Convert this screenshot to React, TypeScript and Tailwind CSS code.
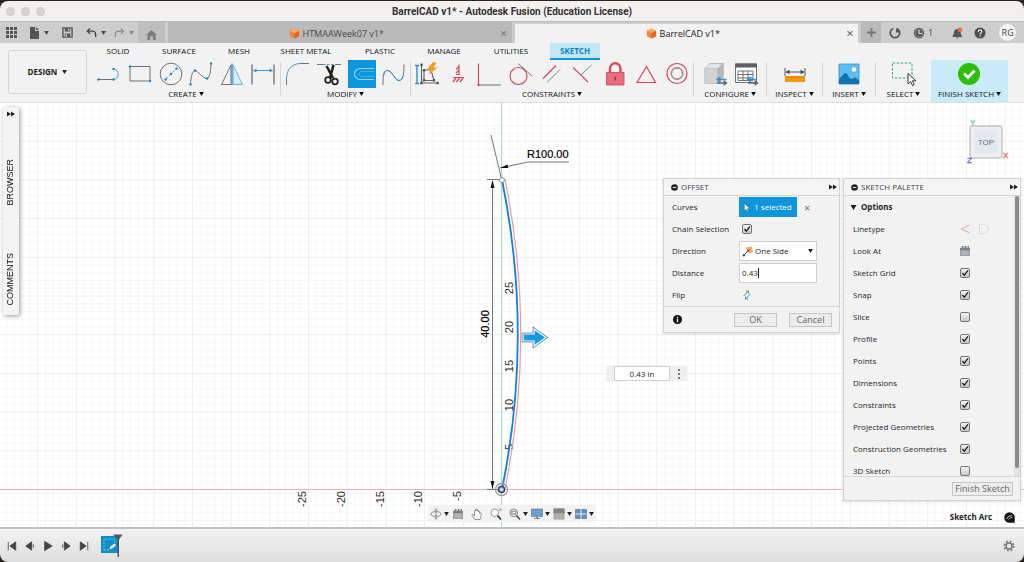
import React, { useState } from "react";

const BLUE = "#2a93d0";
const RED = "#d9485a";

function Caret({ className = "" }: { className?: string }) {
  return (
    <svg viewBox="0 0 6 5" className={"h-[4px] w-[5px] shrink-0 " + className} fill="currentColor" aria-hidden="true">
      <path d="M0 0h6L3 5z" />
    </svg>
  );
}

function Icon({ children, size = "size-[26px]" }: { children: React.ReactNode; size?: string }) {
  return (
    <svg viewBox="0 0 26 26" className={size + " shrink-0"} fill="none" stroke="#5f6468" strokeWidth="0.9" aria-hidden="true">
      {children}
    </svg>
  );
}

function Dots({ pts }: { pts: number[][] }) {
  return (
    <>
      {pts.map(([x, y]) => (
        <circle key={x + "-" + y} cx={x} cy={y} r="1.200" fill="#1a84d0" stroke="none" />
      ))}
    </>
  );
}

const icons: Record<string, React.ReactNode> = {
  Line: (
    <>
      <path d="M2.500 18.500h15" />
      <path d="M17.500 8a5.300 5.300 0 0 1 0 10.500" stroke={BLUE} />
      <Dots pts={[[2.5, 18.5], [17.5, 18.5], [17.5, 8]]} />
    </>
  ),
  Rectangle: (
    <>
      <path d="M3 5.500h20v14.500H3z" />
      <Dots pts={[[3, 5.5], [23, 20]]} />
    </>
  ),
  Circle: (
    <>
      <circle cx="13" cy="13" r="10.800" />
      <path d="M8 18L18 8" stroke={BLUE} strokeDasharray="3 1.500" />
      <Dots pts={[[7.5, 18.5], [13, 13], [18.5, 7.5]]} />
    </>
  ),
  Spline: (
    <>
      <path d="M2.500 23.500C3 15 4.500 9.500 7 9.500s8 8 12 8c3 0 4-9 4-15" />
      <Dots pts={[[2.5, 23.5], [7, 9.5], [19, 17.5], [23, 2.5]]} />
    </>
  ),
  Mirror: (
    <>
      <path d="M12 4v19.500H2.500z" />
      <path d="M14 4v19.500h9.500z" fill="#d3ecf9" stroke="#6aa9cc" />
      <path d="M13 2.500v21.500" stroke={BLUE} strokeWidth="1.200" />
    </>
  ),
  Dimension: (
    <>
      <path d="M2 3.500v20M24 3.500v20" strokeWidth="1.200" />
      <path d="M3.500 9.500h19" stroke={BLUE} />
      <path d="M3 9.500l3.500-2v4zM23 9.500l-3.500-2v4z" fill={BLUE} stroke="none" />
    </>
  ),
  Fillet: (
    <>
      <path d="M2.500 24v-6M17 2.500h8" />
      <path d="M2.500 18C2.500 8 8 2.500 17 2.500" stroke={BLUE} />
    </>
  ),
  Trim: (
    <>
      <path d="M1 3.500h6M19 3.500h6" />
      <path d="M7 3.500h12" stroke={BLUE} strokeDasharray="2.500 1.500" />
      <path d="M10.500 5l6.500 12M17.500 4L14 17" stroke="#222" strokeWidth="2.600" />
      <circle cx="12" cy="19" r="2.800" stroke="#222" strokeWidth="1.800" />
      <circle cx="19" cy="20.500" r="2.800" stroke="#222" strokeWidth="1.800" />
    </>
  ),
  Offset: (
    <>
      <path d="M25 7.500H11a5.500 5.500 0 0 0 0 11h14" stroke="#9ad6f4" strokeWidth="1.200" />
      <path d="M25 10.500H12.500a2.500 2.500 0 0 0 0 5H25" stroke="#56b5e6" strokeWidth="0.700" />
    </>
  ),
  "Change curve": (
    <>
      <path d="M2 24C2 12 3 9.500 6.500 9.500c5 0 7 10 11.500 10 4 0 5-6 5-16" />
      <path d="M2.800 14.500C3.500 10.500 4.500 9.500 6.500 9.500c5 0 7 10 11.500 10 2 0 3.300-1.500 4.200-4.500" stroke={BLUE} />
    </>
  ),
  "Auto constrain": (
    <>
      <path d="M3 4.500v18M1 4.500h4M1 22.500h4" stroke={BLUE} strokeWidth="1.400" />
      <path d="M7.500 3.500v18.500h16.500M10 9v10.500h10l-3-10.500z" strokeWidth="1.100" />
      <path d="M6.300 2.500h2.400v2.400H6.300zM6.300 20.800h2.400v2.400H6.300zM22.500 20.800h2.400v2.400h-2.400zM8.800 8h2.400v2.400H8.800zM8.800 18h2.400v2.400H8.800zM18.800 18h2.400v2.400h-2.400z" fill="#555" stroke="none" />
      <path d="M19 1l-6 7h4l-2 5.500 8.500-7h-4l3-5z" fill="#f5a01d" stroke="none" />
    </>
  ),
  "Horizontal/Vertical": (
    <g stroke={RED}>
      <path d="M14 3.500v10M11 12l3-3M11 8.500l3-3M11 13.500h4M8 16.500h11" strokeWidth="1.200" />
      <path d="M8 21l3-4M11.500 21l3-4M15 21l3-4" strokeWidth="1.400" />
    </g>
  ),
  Perpendicular: (
    <>
      <path d="M2.500 24h22.500" />
      <path d="M2.500 2.500V24" stroke={RED} strokeWidth="1.200" />
      <circle cx="2.500" cy="24" r="1.200" fill={RED} stroke="none" />
    </>
  ),
  Tangent: (
    <>
      <circle cx="10.500" cy="15" r="8.500" stroke={RED} strokeWidth="1.200" />
      <path d="M10 2.500L24 15" />
    </>
  ),
  Parallel: (
    <>
      <path d="M4 17.500L17 4.500" stroke={RED} strokeWidth="1.200" />
      <path d="M8 21.500L21 8.500" stroke="#5d7f6e" />
    </>
  ),
  Coincident: (
    <>
      <path d="M3 6.500l15 14.500" stroke={RED} strokeWidth="1.100" />
      <path d="M11 14L21.500 4" stroke="#5d7f6e" />
    </>
  ),
  Fix: (
    <>
      <path d="M8 12V7.500a5.200 5.200 0 0 1 10.400 0V12" stroke={RED} strokeWidth="2.400" />
      <path d="M4.500 11.500h17.500v12.500H4.500z" fill="#ea6d7b" stroke={RED} />
      <path d="M13.200 15.500v4" stroke="#8c2330" strokeWidth="1.200" />
    </>
  ),
  Equal: <path d="M13.500 5.500L22.500 21.500h-18.500z" stroke={RED} strokeWidth="1.200" />,
  Concentric: (
    <>
      <circle cx="13" cy="12.500" r="10" stroke={RED} strokeWidth="1.200" />
      <circle cx="13" cy="12.500" r="5.400" stroke="#4f8a72" />
      <circle cx="13" cy="12.500" r="6.200" stroke={RED} strokeWidth="0.600" />
    </>
  ),
  Configure: (
    <>
      <path d="M3 7.500L8 2.500h13v14l-5 6H3z" fill="#e3e4e5" stroke="#b2b4b6" />
      <path d="M3 7.500h13v15H3z" fill="#cfd1d2" stroke="#c0c2c4" />
      <path d="M16 7.500l5-5v14l-5 6z" fill="#b6b9bb" stroke="#b0b2b4" />
      <path d="M14.500 18.500h10M18.500 16l-3.500 2.500 3.500 2.500" stroke={BLUE} strokeWidth="1.400" />
      <path d="M15 22h9.500M21.500 19.800l3 2.200-3 2.200" strokeWidth="1.400" />
    </>
  ),
  "Configuration table": (
    <>
      <path d="M2.500 3h21v18.500h-21z" fill="#fff" />
      <path d="M2 2.500h22v4H2z" fill="#5c5f63" stroke="none" />
      <path d="M5 10h15M5 13.500h15M5 17h15M5 10v9.500h15M10 10v9.500M15 10v9.500M20 10v9.500" />
      <path d="M14 18.500h10M18 16l-3.500 2.500 3.500 2.500" stroke={BLUE} strokeWidth="1.400" />
      <path d="M15 22h9.500M21.500 19.800l3 2.200-3 2.200" strokeWidth="1.400" />
    </>
  ),
  Measure: (
    <>
      <path d="M3 7v8M23 7v8M4 11h18" stroke="#445" />
      <path d="M3.500 11l4-2.200v4.400zM22.500 11l-4-2.200v4.400z" fill="#33506a" stroke="none" />
      <path d="M3 15h20v6H3z" fill="#f4980f" stroke="none" />
      <path d="M6 15v2M9 15v2M12 15v2M15 15v2M18 15v2M21 15v2" stroke="#b66a00" strokeWidth="0.600" />
    </>
  ),
  Insert: (
    <>
      <path d="M3 3h20v20H3z" fill="#5fbcf0" stroke="#3497d2" />
      <circle cx="18" cy="8.500" r="2.300" fill="#fff" stroke="none" />
      <path d="M3 23V18c3-2 4.500-6 6.500-6s4 6 5.500 6 2.500-1.500 4-1.500 2.500 2.500 4 3V23z" fill="#1273ad" stroke="none" />
    </>
  ),
  Select: (
    <>
      <path d="M1.500 2h19.500v15H1.500z" stroke="#35a86c" strokeDasharray="2.500 1.600" strokeWidth="1" />
      <path d="M17 12.500v10.500l2.600-2.400 1.900 3.900 1.800-0.900-1.900-3.800h3.400z" fill="#fff" stroke="#333" strokeWidth="1" />
    </>
  ),
  "Finish sketch": (
    <>
      <circle cx="12" cy="13" r="11" fill="#2bc003" stroke="none" />
      <path d="M7 12.500l4 4 6.500-7" stroke="#fff" strokeWidth="2.800" />
    </>
  ),
};

function ToolGroup({ label, tools, width }: { label: string; tools: string[]; width: string }) {
  return (
    <div className={"flex shrink-0 flex-col items-center " + width}>
      <div className="flex w-full">
        {tools.map((t) => (
          <button key={t} aria-label={t} className="flex h-[28px] flex-1 items-center justify-center">
            <span className={t === "Offset" ? "flex h-[28px] w-[28px] items-center justify-center bg-[#0c96dc]" : "flex"}>
              <Icon>{icons[t]}</Icon>
            </span>
          </button>
        ))}
      </div>
      <button className="flex h-[12px] items-center gap-[2px] whitespace-nowrap text-[8px] leading-[12px] text-[#111]">
        {label}
        <Caret />
      </button>
    </div>
  );
}

function Sep() {
  return <div className="mt-[2px] h-[34px] w-px shrink-0 bg-[#d5d5d5]" />;
}

function Check({ id, on, set }: { id: string; on: boolean; set: () => void }) {
  return (
    <span className="grid size-[10px]">
      <input
        id={id}
        type="checkbox"
        checked={on}
        onChange={set}
        className="col-start-1 row-start-1 size-[10px] appearance-none rounded-[2px] border border-[#757575] bg-linear-to-b from-[#f4f4f4] to-[#c8c8c8]"
      />
      {on && (
        <svg viewBox="0 0 10 10" className="pointer-events-none col-start-1 row-start-1 size-[10px]" fill="none" stroke="#161616" strokeWidth="1.300">
          <path d="M2.500 5l1.800 2.300L8 2.300" />
        </svg>
      )}
    </span>
  );
}

function PanelHeader({ title }: { title: string }) {
  return (
    <div className="flex h-[17px] shrink-0 items-center gap-[3px] border-b border-[#d6d6d6] bg-[#f5f5f5] px-[7px] text-[8px] text-[#444]">
      <svg viewBox="0 0 8 8" className="size-[7px]">
        <circle cx="4" cy="4" r="3.800" fill="#222" />
        <path d="M2 4h4" stroke="#fff" />
      </svg>
      <h2 className="flex-1">{title}</h2>
      <button aria-label={"Collapse " + title} className="-mr-[5px]">
        <Forward />
      </button>
    </div>
  );
}

function Forward() {
  return (
    <svg viewBox="0 0 8 6" className="h-[6px] w-[8px]" fill="#222">
      <path d="M0 0.500l4 2.500-4 2.500zM4 0.500l4 2.500-4 2.500z" />
    </svg>
  );
}

function Calendar({ className = "" }: { className?: string }) {
  return (
    <svg viewBox="0 0 12 12" className={"size-[12px] " + className}>
      <path d="M1 4h10v7H1z" fill="#9ba1ab" />
      <path d="M1 3h10v2H1zM2.500 1h2v3h-2zM5.500 1h2v3h-2zM8.500 1h1.500v3H8.500z" fill="#7b808a" />
      <path d="M2 7h8M2 9h8M4 6v4M6 6v4M8 6v4" stroke="#c9cdd4" strokeWidth="0.500" />
    </svg>
  );
}

function Cube() {
  return (
    <svg viewBox="0 0 12 12" className="size-[11px]">
      <path d="M6 0.500l5 2.500v6L6 11.500 1 9V3z" fill="#f4813a" />
      <path d="M6 5.500l5-2.500v6L6 11.500z" fill="#e0661f" />
      <path d="M6 0.500l5 2.500-5 2.500L1 3z" fill="#f9ac68" />
    </svg>
  );
}

function TitleBar() {
  return (
    <header className="flex h-[20px] shrink-0 items-center bg-[#f2f1ef] px-[6px]">
      <div className="flex flex-1 gap-[6px]">
        {["Close", "Minimize", "Zoom"].map((n) => (
          <button key={n} aria-label={n} className="size-[9px] rounded-full border border-[#cccac8] bg-[#d6d4d2]" />
        ))}
      </div>
      <h1 className="font-[Roboto,sans-serif] text-[10px] font-bold text-[#333]">
        BarrelCAD v1* - Autodesk Fusion (Education License)
      </h1>
      <div className="flex-1" />
    </header>
  );
}

function DocumentBar() {
  return (
    <div className="flex h-[22px] shrink-0 border-t border-[#bcbcbc] bg-[#cdcdcd] text-[#4a4a4a]">
      <div className="flex w-[138px] shrink-0 items-center pl-[6px]">
        <button aria-label="Apps">
          <svg viewBox="0 0 11 11" className="size-[11px]" fill="#555">
            {[0, 4, 8].map((y) => [0, 4, 8].map((x) => <rect key={x + "," + y} x={x} y={y} width="3" height="3" />))}
          </svg>
        </button>
        <button aria-label="File" className="ml-[12px] flex items-center gap-[4px]">
          <svg viewBox="0 0 11 12" className="h-[12px] w-[11px]" fill="#555">
            <path d="M1 0h5v4h4v8H1zM7 0l3 3H7z" />
          </svg>
          <Caret />
        </button>
        <button aria-label="Save" className="ml-[13px]">
          <svg viewBox="0 0 12 12" className="size-[11px]">
            <path d="M1 1h10v10H1z" fill="none" stroke="#555" strokeWidth="1.500" />
            <path d="M3 1h6v4H3zM3 7h6v4H3z" fill="#555" />
            <path d="M6.500 1.500h1.500v2.500H6.500zM4 8h1.500v3H4z" fill="#cdcdcd" />
          </svg>
        </button>
        <button aria-label="Undo" className="ml-[13px] flex items-center gap-[4px]">
          <svg viewBox="0 0 12 12" className="size-[11px]" fill="none" stroke="#444" strokeWidth="1.500">
            <path d="M4.500 1.500L1.500 4.500l3 3M1.500 4.500H7c3 0 4 2 3.500 6.500" />
          </svg>
          <Caret />
        </button>
        <button aria-label="Redo" className="ml-[8px] flex items-center gap-[4px] text-[#888]">
          <svg viewBox="0 0 12 12" className="size-[11px]" fill="none" stroke="currentColor" strokeWidth="1.300">
            <path d="M7.500 1.500l3 3-3 3M10.500 4.500H5C2 4.500 1 6.500 1.500 11" />
          </svg>
          <Caret />
        </button>
      </div>
      <button aria-label="Home" className="flex w-[27px] shrink-0 items-center justify-center bg-[#bebebe] pt-[4px]">
        <svg viewBox="0 0 12 11" className="h-[10px] w-[11px]" fill="#7d7d7d">
          <path d="M6 0L12 5.500h-1.500V11h-3V7h-3v4h-3V5.500H0z" />
        </svg>
      </button>
      <nav className="flex min-w-0 flex-1 bg-[#cdcdcd] pl-[3px]">
        <a href="#htmaa" className="flex flex-1 items-center bg-[#b9b9b9] pl-[5px] pr-[4px] pt-[2px] text-[9px]">
          <span className="flex flex-1 items-center justify-center gap-[3px]">
            <Cube />
            HTMAAWeek07 v1*
          </span>
          <span className="w-[8px] text-center text-[13px] leading-none text-[#777]">×</span>
        </a>
        <a href="#barrel" className="ml-[3px] mt-[2px] flex flex-1 items-center bg-[#f2f2f2] pl-[5px] pr-[4px] text-[9px] text-[#222]">
          <span className="flex flex-1 items-center justify-center gap-[3px]">
            <Cube />
            BarrelCAD v1*
          </span>
          <span className="w-[8px] text-center text-[13px] leading-none text-[#555]">×</span>
        </a>
      </nav>
      <button aria-label="New tab" className="ml-[3px] flex w-[20px] shrink-0 items-center justify-center bg-[#b9b9b9] text-[#777]">
        <svg viewBox="0 0 9 9" className="size-[9px]" stroke="currentColor" strokeWidth="1.800">
          <path d="M4.500 0v9M0 4.500h9" />
        </svg>
      </button>
      <div className="flex w-[143px] shrink-0 items-center pl-[8px]">
        <button aria-label="Extensions">
          <svg viewBox="0 0 12 12" className="size-[12px]" fill="none" stroke="#555" strokeWidth="1.700">
            <path d="M7.800 1.500a4.700 4.700 0 1 1-3.600 0M7.800 1.500v3.200h3.200" />
          </svg>
        </button>
        <button aria-label="Job status" className="ml-[12px] flex items-center gap-[2px] text-[9px]">
          <svg viewBox="0 0 13 12" className="h-[12px] w-[13px]">
            <circle cx="6" cy="6" r="5.200" fill="#555" />
            <path d="M6 3v3.500h3" fill="none" stroke="#ddd" strokeWidth="1.200" />
            <circle cx="6" cy="6" r="3.900" fill="none" stroke="#bbb" strokeWidth="0.500" />
          </svg>
          1
        </button>
        <button aria-label="Notifications" className="ml-[18px]">
          <svg viewBox="0 0 12 12" className="size-[12px]">
            <path d="M1.500 9C3 7.500 2.500 5.500 3.500 3.500 4 2.500 5 2 6 2s3 1 3.500 2.500S9.500 8 11 9v1H1.500zM5 10.500h2.500L6.200 12z" fill="#555" />
            <circle cx="9" cy="2.800" r="2.300" fill="#ee6a47" />
          </svg>
        </button>
        <button aria-label="Help" className="ml-[11px]">
          <svg viewBox="0 0 12 12" className="size-[12px]">
            <circle cx="6" cy="6" r="5.500" fill="#4c4c4c" />
            <path d="M4.200 4.700c0-2.400 3.700-2.300 3.600-0.200C7.800 5.700 6.100 5.800 6.100 7.300M6.100 8.300v1.300" fill="none" stroke="#eee" strokeWidth="1.200" />
          </svg>
        </button>
        <button className="ml-[13px] flex size-[17px] shrink-0 items-center justify-center rounded-full bg-[#f4f4f4] text-[9px] text-[#444]">RG</button>
      </div>
    </div>
  );
}

const ribbonTabs: [string, string][] = [
  ["SOLID", "w-[56px]"],
  ["SURFACE", "w-[66px]"],
  ["MESH", "w-[54px]"],
  ["SHEET METAL", "w-[80px]"],
  ["PLASTIC", "w-[68px]"],
  ["MANAGE", "w-[60px]"],
  ["UTILITIES", "w-[74px]"],
];

function Ribbon() {
  return (
    <div className="flex h-[60px] shrink-0 border-b border-[#dedede] bg-[#f2f2f2]">
      <button className="ml-[8px] mt-[7px] flex h-[44px] w-[79px] shrink-0 items-center justify-center gap-[5px] rounded-[3px] border border-[#d4d4d4] text-[8px] font-bold text-[#222]">
        DESIGN
        <Caret />
      </button>
      <div className="flex min-w-0 flex-1 flex-col">
        <nav className="flex h-[17px] shrink-0 pl-[3px] text-[8px] text-[#111]">
          {ribbonTabs.map(([t, w]) => (
            <a key={t} href={"#" + t} className={"flex shrink-0 items-center justify-center whitespace-nowrap pb-[2px] " + w}>
              {t}
            </a>
          ))}
          <a href="#SKETCH" className="ml-[2px] flex w-[50px] shrink-0 items-center justify-center border-b-2 border-[#0a97d9] bg-[#c2e8f8] font-bold text-[#0788c8]">
            SKETCH
          </a>
        </nav>
        <div className="flex min-w-0 flex-1 pl-[7px]">
          <ToolGroup label="CREATE" width="w-[184px]" tools={["Line", "Rectangle", "Circle", "Spline", "Mirror", "Dimension"]} />
          <div className="w-[2px] shrink-0" />
          <Sep />
          <ToolGroup label="MODIFY" width="w-[129px]" tools={["Fillet", "Trim", "Offset", "Change curve"]} />
          <Sep />
          <ToolGroup label="CONSTRAINTS" width="w-[282px]" tools={["Auto constrain", "Horizontal/Vertical", "Perpendicular", "Tangent", "Parallel", "Coincident", "Fix", "Equal", "Concentric"]} />
          <Sep />
          <div className="flex w-[72px] shrink-0 justify-center">
            <ToolGroup label="CONFIGURE" width="w-[62px]" tools={["Configure", "Configuration table"]} />
          </div>
          <Sep />
          <ToolGroup label="INSPECT" width="w-[55px]" tools={["Measure"]} />
          <Sep />
          <ToolGroup label="INSERT" width="w-[52px]" tools={["Insert"]} />
          <Sep />
          <ToolGroup label="SELECT" width="w-[55px]" tools={["Select"]} />
          <div className="shrink-0 bg-[#c9ebf9]">
            <ToolGroup label="FINISH SKETCH" width="w-[77px]" tools={["Finish sketch"]} />
          </div>
        </div>
      </div>
    </div>
  );
}

const UNIT = 7.74;

function Drawing() {
  const cols = Array.from({ length: 140 }, (_, i) => i - 68);
  const rows = Array.from({ length: 62 }, (_, i) => i - 8);
  const ticksX: [string, number][] = [["-25", 302], ["-20", 341], ["-15", 380], ["-10", 418]];
  const ticksY: [string, number][] = [["25", 288], ["20", 327], ["15", 366], ["10", 405], ["5", 447]];
  return (
    <svg viewBox="0 103 1024 424" preserveAspectRatio="xMidYMid slice" className="h-full w-full" fontFamily="Liberation Sans, sans-serif" fontSize="11">
      {cols.map((i) => (
        <path key={"c" + i} d={`M${502 + i * UNIT} 103v424`} stroke={i % 5 ? "#f7f7f7" : "#eeeeef"} />
      ))}
      {rows.map((i) => (
        <path key={"r" + i} d={`M0 ${489.5 - i * UNIT}h1024`} stroke={i % 5 ? "#f7f7f7" : "#eeeeef"} />
      ))}
      <path d="M0 489.500h1024" stroke="#f4b0bb" />
      <path d="M501.500 103v424" stroke="#a8e0c6" />
      <g fill="#2a2a2a" textAnchor="middle">
        {ticksX.map(([t, x]) => (
          <text key={t} transform={`translate(${x + 4} 499) rotate(-90)`}>{t}</text>
        ))}
        <text transform="translate(461 496) rotate(-90)">-5</text>
        {ticksY.map(([t, y]) => (
          <text key={t} transform={`translate(513 ${y}) rotate(-90)`}>{t}</text>
        ))}
      </g>
      <g fill="none" stroke="#666" strokeWidth="0.900">
        <path d="M492.500 181v308M487 179.500h14M487 489.500h14M491 135l10 42M500 168l28-6h41" />
      </g>
      <path d="M492.500 180l-2 8h4zM492.500 489l-2-8h4zM500 168l7.500-3.500 0.800 3.600z" fill="#111" />
      <g fill="#000" stroke="#000" strokeWidth="0.200">
        <text x="527" y="158">R100.00</text>
        <text transform="translate(488.500 324) rotate(-90)" textAnchor="middle">40.00</text>
      </g>
      <path d="M502 179.500h3A777 777 0 0 1 505 489" fill="none" stroke="#f3979b" strokeWidth="1.200" />
      <path d="M502 180A774 774 0 0 1 502 489.500" fill="none" stroke="#0f7fe0" strokeWidth="1.800" />
      <circle cx="502" cy="180" r="2.500" fill="#fff" stroke="#6b9aa8" />
      <circle cx="501.500" cy="489.500" r="6" fill="none" stroke="#999" strokeWidth="1.300" />
      <circle cx="501.500" cy="489.500" r="3" fill="#c5d6ea" stroke="#333b66" strokeWidth="1.500" />
      <path d="M523 334h11v-5l12 8.500-12 8.500v-5h-11z" fill="#129be4" stroke="#3b6f8e" strokeWidth="2.600" />
      <path d="M523 334h11v-5l12 8.500-12 8.500v-5h-11z" fill="#129be4" stroke="#fff" strokeWidth="1.200" />
    </svg>
  );
}

const panelButton = "h-[14px] whitespace-nowrap border border-[#c6c6c6] bg-[#ececec] text-[9px] leading-[12px] text-[#666]";

function OffsetPanel() {
  const [chain, setChain] = useState(true);
  return (
    <section className="absolute right-[184px] top-[75px] w-[177px] border border-[#d2d2d2] bg-[#f2f2f2] text-[8px] text-[#1e1e1e] shadow-sm">
      <PanelHeader title="OFFSET" />
      <div className="grid grid-cols-[67px_1fr] px-[8px]">
        <div className="flex h-[22px] items-center">Curves</div>
        <div className="flex h-[22px] items-center">
          <button className="flex h-[20px] w-[58px] items-center justify-center gap-[4px] bg-[#0e95dc] text-white">
            <svg viewBox="0 0 7 10" className="h-[9px] w-[6px]">
              <path d="M0.500 0.500v8l2-1.700L4 9.500l1-0.500-1.200-2.700H6.500z" fill="#fff" stroke="#567" strokeWidth="0.500" />
            </svg>
            1 selected
          </button>
          <button aria-label="Clear selection" className="ml-[7px] text-[11px] leading-none text-[#777]">×</button>
        </div>
        <label htmlFor="chain" className="flex h-[22px] items-center whitespace-nowrap">Chain Selection</label>
        <div className="flex h-[22px] items-center pl-[3px]">
          <Check id="chain" on={chain} set={() => setChain(!chain)} />
        </div>
        <label htmlFor="direction" className="flex h-[22px] items-center">Direction</label>
        <div className="flex h-[22px] items-center">
          <div className="flex h-[20px] w-[78px] items-center border border-[#cfcfcf] bg-white px-[2px]">
            <svg viewBox="0 0 11 11" className="size-[11px] shrink-0">
              <path d="M3.500 1.500L10 0.500l1 5.500-3.500 1.500z" fill="#f3ab72" />
              <path d="M1.500 9.500L7 4" stroke="#555" strokeWidth="1" />
              <circle cx="1.800" cy="9.200" r="1.200" fill="#555" />
              <path d="M8 3L4.500 4 7 6.500z" fill="#b5673c" />
            </svg>
            <select id="direction" className="min-w-0 flex-1 appearance-none bg-transparent pl-[2px]">
              <option>One Side</option>
              <option>Two Sides</option>
            </select>
            <Caret className="mr-[1px]" />
          </div>
        </div>
        <label htmlFor="distance" className="flex h-[22px] items-center">Distance</label>
        <div className="flex h-[22px] items-center">
          <div className="flex h-[20px] w-[78px] items-center border border-[#cfcfcf] bg-white px-[2px]">
            <input id="distance" defaultValue="0.43" className="field-sizing-content min-w-0 bg-transparent outline-none" />
            <span className="h-[10px] w-px bg-[#222]" />
          </div>
        </div>
        <div className="flex h-[22px] items-center">Flip</div>
        <div className="flex h-[22px] items-center pl-[3px]">
          <button aria-label="Flip">
            <svg viewBox="0 0 10 10" className="size-[10px]" fill="none" strokeWidth="0.900">
              <path d="M1.500 6L6 1.500M4 1h2.500v2.500" stroke="#666" />
              <path d="M8.500 4L4 8.500M6 9H3.500V6.500" stroke="#1791d8" />
            </svg>
          </button>
        </div>
      </div>
      <div className="flex h-[26px] items-center gap-[12px] border-t border-[#d6d6d6] px-[7px]">
        <svg viewBox="0 0 10 10" className="ml-[2px] mr-auto size-[9px]">
          <circle cx="5" cy="5" r="5" fill="#111" />
          <path d="M5 2v1.400M5 4.300V8" stroke="#fff" strokeWidth="1.500" />
        </svg>
        <button className={panelButton + " w-[43px]"}>OK</button>
        <button className={panelButton + " w-[43px]"}>Cancel</button>
      </div>
    </section>
  );
}

const optionNames = ["Sketch Grid", "Snap", "Slice", "Profile", "Points", "Dimensions", "Constraints", "Projected Geometries", "Construction Geometries", "3D Sketch"];

function SketchPalette() {
  const [off, setOff] = useState<string[]>(["Slice", "3D Sketch"]);
  const toggle = (n: string) => setOff(off.includes(n) ? off.filter((x) => x !== n) : [...off, n]);
  return (
    <section className="absolute right-[3px] top-[75px] flex w-[178px] flex-col border border-[#d2d2d2] bg-[#f2f2f2] text-[8px] text-[#1e1e1e] shadow-sm">
      <PanelHeader title="SKETCH PALETTE" />
      <div className="flex h-[280px] overflow-hidden">
        <div className="flex-1 pl-[9px]">
          <button className="-ml-[3px] flex h-[22px] items-center gap-[4px] text-[8px] font-bold">
            <Caret className="h-[5px] w-[7px]" />
            Options
          </button>
          <div className="flex h-[22px] items-center">
            <span className="w-[106px] shrink-0">Linetype</span>
            <button aria-label="Construction">
              <svg viewBox="0 0 16 12" className="h-[12px] w-[14px]" fill="none">
                <path d="M12 1.500L2.500 6l9.500 4.500" stroke="#d8a58f" />
                <path d="M9 1.500v9" stroke="#e6cfc5" strokeDasharray="1.500 1.500" />
              </svg>
            </button>
            <button aria-label="Centerline" className="ml-[5px]">
              <svg viewBox="0 0 12 12" className="size-[12px]" fill="none" stroke="#dcdcdc">
                <path d="M1.500 1.500h6l3 3v3l-3 3h-6z" />
              </svg>
            </button>
          </div>
          <div className="flex h-[22px] items-center">
            <span className="w-[106px] shrink-0">Look At</span>
            <button aria-label="Look at">
              <Calendar />
            </button>
          </div>
          {optionNames.map((n) => (
            <div key={n} className="flex h-[22px] items-center">
              <label htmlFor={n} className="w-[107px] shrink-0 whitespace-nowrap">{n}</label>
              <Check id={n} on={!off.includes(n)} set={() => toggle(n)} />
            </div>
          ))}
        </div>
        <div className="w-[6px] shrink-0 bg-[#e2e2e2] px-px">
          <div className="h-[272px] w-[4px] rounded-[2px] bg-[#8a8a8a]" />
        </div>
      </div>
      <div className="flex h-[24px] items-center justify-end border-t border-[#d6d6d6] pr-[7px]">
        <button className={panelButton + " w-[61px]"}>Finish Sketch</button>
      </div>
    </section>
  );
}

function NavBar() {
  const btn = "flex items-center gap-[2px]";
  return (
    <div className="absolute left-1/2 top-[402px] flex h-[17px] -translate-x-[84px] items-center gap-[3px] bg-[#f2f2f2] px-[2px] text-[#222]">
      <button aria-label="Orbit" className={btn}>
        <svg viewBox="0 0 12 12" className="size-[12px]" fill="none" stroke="#777" strokeWidth="0.800">
          <ellipse cx="6" cy="6" rx="5" ry="2.300" />
          <path d="M6 1.500v9M4.500 2.500L6 0.800l1.500 1.700M4.500 9.500L6 11.200l1.500-1.700" />
        </svg>
        <Caret />
      </button>
      <button aria-label="Look at face"><Calendar className="grayscale" /></button>
      <button aria-label="Pan" className="ml-[4px]">
        <svg viewBox="0 0 12 12" className="size-[12px]" fill="#fff" stroke="#777" strokeWidth="0.800">
          <path d="M4 11.500L1 7.500c-0.500-1 0.500-1.500 1.200-0.800L3.500 8V3c0-1 1.200-1 1.200 0V1.500c0-1 1.300-1 1.300 0V3c0-1.800 1.300-1.500 1.300-0.300V4c0-1.200 1.400-1 1.400 0v1.500c0-1 1.400-1 1.400 0.200 0 2.500-0.400 4-1.100 5.800z" />
        </svg>
      </button>
      <button aria-label="Zoom view" className="ml-[4px]">
        <svg viewBox="0 0 12 12" className="size-[12px]" fill="none">
          <circle cx="4.800" cy="4.800" r="3.800" fill="#fafafa" stroke="#999" />
          <path d="M7.500 7.500l3.500 4" stroke="#333" strokeWidth="1.700" />
          <path d="M9 3l2-2M9.300 1H11v1.700" stroke="#777" strokeWidth="0.700" />
        </svg>
      </button>
      <button aria-label="Fit" className={btn + " ml-[4px]"}>
        <svg viewBox="0 0 12 12" className="size-[12px]" fill="none">
          <circle cx="4.800" cy="4.800" r="3.800" fill="#e5e5e5" stroke="#888" />
          <path d="M2.800 3.500h4v2.600h-4z" stroke="#777" strokeWidth="0.700" />
          <path d="M7.500 7.500l3.500 4" stroke="#444" strokeWidth="1.500" />
        </svg>
        <Caret />
      </button>
      <button aria-label="Display" className={btn}>
        <svg viewBox="0 0 12 12" className="size-[12px]">
          <path d="M0.500 1h11v7.500H0.500z" fill="#6ba0cc" stroke="#557" strokeWidth="0.500" />
          <path d="M5 8.500h2V10h2v1H3v-1h2z" fill="#888" />
        </svg>
        <Caret />
      </button>
      <button aria-label="Grid" className={btn}>
        <svg viewBox="0 0 12 12" className="size-[12px]">
          <path d="M0.500 0.500h11v11H0.500z" fill="#a5a5a5" />
          <path d="M0.500 0.500h11v5H0.500z" fill="#858585" />
          <path d="M0.500 6h11M4 6v5.500M8 6v5.500M0.500 9h11" stroke="#c5c5c5" strokeWidth="0.500" />
        </svg>
        <Caret />
      </button>
      <button aria-label="Viewports" className={btn}>
        <svg viewBox="0 0 12 12" className="size-[12px]">
          <path d="M0.500 1.500h11v9H0.500z" fill="#5b92c2" stroke="#456" strokeWidth="0.500" />
          <path d="M6 1.500v9M0.500 6h11" stroke="#e8f1f8" />
        </svg>
        <Caret />
      </button>
    </div>
  );
}

function Workspace() {
  return (
    <main className="relative min-h-0 flex-1 overflow-hidden bg-white">
      <Drawing />
      <aside className="absolute left-[3px] top-[4px] flex h-[208px] w-[16px] flex-col items-center rounded-[2px] bg-[#f4f4f4] font-['Liberation_Sans',sans-serif] text-[9px] text-[#111] shadow-[1px_1px_4px_rgba(0,0,0,0.4)]">
        <button aria-label="Expand browser" className="mt-[4px]"><Forward /></button>
        <button className="mt-[42px] rotate-180 [writing-mode:vertical-rl]">BROWSER</button>
        <button className="mb-[10px] mt-auto rotate-180 [writing-mode:vertical-rl]">COMMENTS</button>
      </aside>
      <div className="absolute right-[14px] top-[14px] h-[48px] w-[43px]">
        <svg viewBox="0 0 43 48" className="h-full w-full" fontFamily="Liberation Sans, sans-serif" fontSize="8">
          <rect x="3" y="9" width="32" height="32" rx="2" fill="#eceff1" stroke="#aab0b5" />
          <rect x="8" y="14" width="22" height="22" fill="#e3e7ee" />
          <text x="19" y="28" textAnchor="middle" fill="#66707c">TOP</text>
          <text x="3" y="8" fill="#54d66a" stroke="#54d66a" strokeWidth="0.300">Y</text>
          <text x="36" y="41" fill="#ef5b60" stroke="#ef5b60" strokeWidth="0.300">X</text>
          <text x="0" y="46" fill="#5b5be0" stroke="#5b5be0" strokeWidth="0.300">Z</text>
        </svg>
      </div>
      <OffsetPanel />
      <SketchPalette />
      <div className="absolute left-[606px] top-[263px] flex h-[15px] items-center bg-[#efefef] pl-[8px] text-[8px]">
        <input aria-label="Offset distance" defaultValue="0.43 in" className="h-[15px] w-[56px] border border-[#cfcfcf] bg-white text-center text-[#222]" />
        <button aria-label="More" className="flex w-[17px] justify-center">
          <svg viewBox="0 0 2 10" className="h-[10px] w-[2px]" fill="#777">
            <path d="M0 0h2v2H0zM0 4h2v2H0zM0 8h2v2H0z" />
          </svg>
        </button>
      </div>
      <NavBar />
      <div className="absolute bottom-[4px] right-[9px] flex items-center gap-[12px] text-[8px] font-bold text-[#222]">
        Sketch Arc
        <svg viewBox="0 0 12 12" className="size-[11px]">
          <path d="M6 0.300a5.700 5.700 0 0 1 5.700 5.700v5.700H6A5.700 5.700 0 0 1 6 0.300z" fill="#151515" />
          <path d="M3 7.500C4 4.500 6.500 4 9 4M5 8c1-1.500 2.500-2 4-2" fill="none" stroke="#ddd" />
        </svg>
      </div>
    </main>
  );
}

const playback: [string, string][] = [
  ["Go to start", "M1.500 1v10M10.500 1L3.500 6l7 5z"],
  ["Step back", "M8 1L1 6l7 5zM10 4v4"],
  ["Play", "M2 0.500L11 6l-9 5.500z"],
  ["Step forward", "M4 1l7 5-7 5zM2 4v4"],
  ["Go to end", "M10.500 1v10M1.500 1l7 5-7 5z"],
];

function Timeline() {
  return (
    <footer className="flex h-[35px] shrink-0 items-center border-t-2 border-[#c0c0c0] bg-linear-to-b from-[#f2f2f2] to-[#dedede] pl-[7px] pr-[9px]">
      <div className="flex gap-[8px]">
        {playback.map(([n, d]) => (
          <button key={n} aria-label={n}>
            <svg viewBox="0 0 12 12" className="size-[10px]" fill="#444" stroke="#444" strokeWidth="1">
              <path d={d} />
            </svg>
          </button>
        ))}
      </div>
      <button aria-label="Sketch feature" className="ml-[11px]">
        <svg viewBox="0 0 23 24" className="h-[24px] w-[23px]">
          <path d="M1 2h17v17H1z" fill="#0e8ecb" />
          <path d="M4 16V5h11v6M4 16h6" fill="none" stroke="#6cc3ea" strokeDasharray="2 1" />
          <path d="M9.500 15.500l1-3 4-3 1.500 1.800-4 3.200z" fill="#e6f6fd" />
          <path d="M13 0.500h9.500l-3.500 5V23h-1.500V5.500z" fill="#555" />
        </svg>
      </button>
      <button aria-label="Settings" className="ml-auto">
        <svg viewBox="0 0 12 12" className="size-[12px]" fill="none" stroke="#777">
          <circle cx="6" cy="6" r="3" strokeWidth="1.500" />
          <circle cx="6" cy="6" r="4.700" strokeWidth="1.800" strokeDasharray="1.850 1.840" />
        </svg>
      </button>
    </footer>
  );
}

export default function App() {
  return (
    <div className="h-screen bg-[#2b2320] pt-px font-['Open_Sans',sans-serif]">
      <div className="flex h-full flex-col overflow-hidden rounded-[8px]">
        <TitleBar />
        <DocumentBar />
        <Ribbon />
        <Workspace />
        <Timeline />
      </div>
    </div>
  );
}
